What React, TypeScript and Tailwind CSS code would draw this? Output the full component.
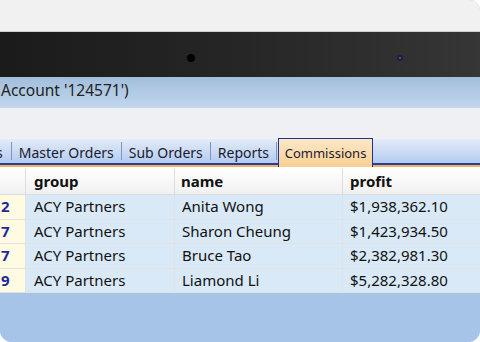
import React from "react"

const rows = [
  { id: "2", group: "ACY Partners", name: "Anita Wong", profit: "$1,938,362.10" },
  { id: "7", group: "ACY Partners", name: "Sharon Cheung", profit: "$1,423,934.50" },
  { id: "7", group: "ACY Partners", name: "Bruce Tao", profit: "$2,382,981.30" },
  { id: "9", group: "ACY Partners", name: "Liamond Li", profit: "$5,282,328.80" },
]

const tabs = ["s", "Master Orders", "Sub Orders", "Reports"]

const Tab = ({ label, first }: { label: string; first?: boolean }) => (
  <div className="flex items-center h-full">
    <span className={first ? "pl-0 pr-[8px] -ml-[4px] pt-[3px]" : "px-[7px] pt-[3px]"}>{label}</span>
    <div className="w-[1px] h-[18px] bg-[#7f93c2]" />
  </div>
)

export default function App() {
  return (
    <div className="w-[480px] h-[342px] bg-white overflow-hidden" style={{ fontFamily: '"Noto Sans", "Open Sans", sans-serif' }}>
      <div className="w-full h-full flex flex-col overflow-hidden rounded-tr-[10px] rounded-br-[12px] rounded-bl-[12px] bg-[#a6c4e8]">
        <div className="h-[31px] bg-[#f1f1f1] shrink-0" />
        <div className="h-[1px] bg-[#cfcfcf] shrink-0" />

        {/* bezel */}
        <div className="relative h-[45px] shrink-0 bg-gradient-to-r from-[#1b1b1b] via-[#262626] to-[#363636]">
          <div className="absolute left-[187px] top-[22px] w-[8px] h-[8px] rounded-full bg-black" />
          <div className="absolute left-[397px] top-[23px] w-[6px] h-[6px] rounded-full bg-[#1f2238] flex items-center justify-center">
            <div className="w-[2px] h-[2px] rounded-full bg-[#4a56e0]" />
          </div>
        </div>

        {/* window title */}
        <div className="h-[31px] shrink-0 flex items-center bg-gradient-to-b from-[#a2bedb] to-[#c2d7ee] text-[15.5px] text-[#222] leading-none">
          <span className="pl-[1px] pb-[3px]">Account '124571')</span>
        </div>

        <div className="h-[31px] shrink-0 bg-[#eef0f3]" />

        {/* tabs */}
        <div className="h-[24px] shrink-0 flex items-stretch bg-gradient-to-b from-[#e3ecf9] to-[#b4cbef] text-[14px] text-[#1a1a2e] leading-none">
          {tabs.map((t, i) => (
            <Tab key={i} label={t} first={i === 0} />
          ))}
          <div className="ml-[1px] -mt-[1px] -mb-[4px] w-[95px] z-10 flex items-center justify-center border-l border-r border-t border-[#22308f] bg-gradient-to-b from-[#fde8c8] to-[#f9cf92] text-[13px]">
            <span className="pt-[1px]">Commissions</span>
          </div>
        </div>
        <div className="h-[2px] shrink-0 bg-[#2a3a9e]" />
        <div className="h-[2px] shrink-0 bg-[#f0b35c]" />
        <div className="h-[2px] shrink-0 bg-white" />

        {/* grid */}
        <div className="grid grid-cols-[26px_149px_168px_1fr] shrink-0 text-[15px] text-[#111] leading-none">
          <div className="h-[26px] border-r border-b border-[#dcdcdc] bg-gradient-to-b from-white to-[#f0f0f0]" />
          <div className="h-[26px] flex items-center pl-[8px] font-bold border-r border-b border-[#dcdcdc] bg-gradient-to-b from-white to-[#f0f0f0]">group</div>
          <div className="h-[26px] flex items-center pl-[6px] font-bold border-r border-b border-[#dcdcdc] bg-gradient-to-b from-white to-[#f0f0f0]">name</div>
          <div className="h-[26px] flex items-center pl-[7px] font-bold border-b border-[#dcdcdc] bg-gradient-to-b from-white to-[#f0f0f0]">profit</div>
          {rows.map((r, i) => (
            <React.Fragment key={i}>
              <div className="h-[24.5px] flex items-center pl-[1px] font-bold text-[#1b2a9c] bg-[#fffbe2] border-r border-b border-[#e2e2e2]">{r.id}</div>
              <div className="h-[24.5px] flex items-center pl-[8px] bg-[#d9e9f7] border-r border-b border-[#e2e2e2]">{r.group}</div>
              <div className="h-[24.5px] flex items-center pl-[7px] bg-[#d9e9f7] border-r border-b border-[#e2e2e2]">{r.name}</div>
              <div className="h-[24.5px] flex items-center pl-[7px] bg-[#d9e9f7] border-b border-[#e2e2e2]">{r.profit}</div>
            </React.Fragment>
          ))}
        </div>

        <div className="flex-1 bg-[#a6c4e8]" />
      </div>
    </div>
  )
}
